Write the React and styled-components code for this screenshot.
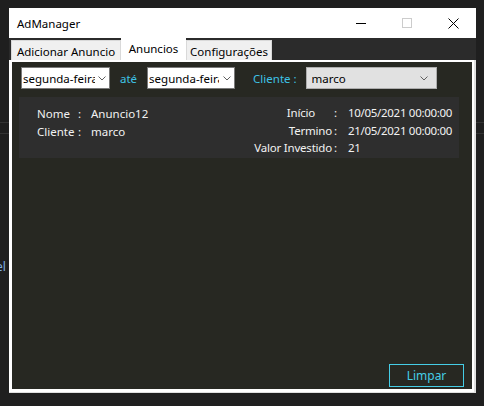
import React from 'react';
import styled, { createGlobalStyle } from 'styled-components';

const GlobalStyle = createGlobalStyle`
  html, body {
    margin: 0;
    padding: 0;
  }
  body {
    background: #1f1f1f;
    width: 484px;
    height: 406px;
    overflow: hidden;
    font-family: "Noto Sans", "Liberation Sans", sans-serif;
  }
`;

const Page = styled.div`
  position: relative;
  width: 484px;
  height: 406px;
  overflow: hidden;
`;

const BackLine = styled.div`
  position: absolute;
  left: 0;
  right: 0;
  height: 1px;
  background: #343434;
`;

const BackText = styled.span`
  position: absolute;
  left: -4px;
  top: 258px;
  font-size: 12px;
  color: #7fb0e0;
`;

const Window = styled.div`
  position: relative;
  margin: 8px 0 0 9px;
  width: 467px;
  height: 385px;
  display: flex;
  flex-direction: column;
  background: #2b2b2b;
`;

const TitleBar = styled.div`
  height: 30px;
  background: #fff;
  display: flex;
  align-items: center;
  padding-left: 8px;
`;

const Title = styled.span`
  flex: 1;
  font-size: 11.5px;
  color: #000;
`;

const CaptionButton = styled.div`
  width: 46px;
  height: 30px;
  display: flex;
  align-items: center;
  justify-content: center;
`;

const TabStrip = styled.div`
  height: 22px;
  display: flex;
  align-items: flex-end;
  padding-left: 2px;
`;

const Tab = styled.div`
  box-sizing: border-box;
  width: ${p => p.w}px;
  height: ${p => (p.active ? 22 : 20)}px;
  background: ${p => (p.active ? '#fff' : '#f0f0f0')};
  border: 1px solid ${p => (p.active ? '#fff' : '#d9d9d9')};
  border-bottom: none;
  font-size: 11.5px;
  color: #000;
  display: flex;
  align-items: ${p => (p.active ? 'flex-start' : 'center')};
  padding-top: ${p => (p.active ? 2 : 1)}px;
  justify-content: center;
`;

const TabPage = styled.div`
  flex: 1;
  display: flex;
  border-right: 2px solid #e0e0e0;
  border-bottom: 1px solid #e0e0e0;
`;

const Frame = styled.div`
  flex: 1;
  display: flex;
  flex-direction: column;
  background: #272822;
  border: 2px solid #fff;
  border-left-width: 3px;
  border-bottom-width: 3px;
`;

const FilterRow = styled.div`
  display: flex;
  align-items: center;
  margin-top: 5px;
  padding-left: 9px;
  height: 22px;
`;

const Select = styled.div`
  box-sizing: border-box;
  width: ${p => p.w}px;
  height: 22px;
  background: ${p => (p.flat ? '#e1e1e1' : '#fff')};
  border: 1px solid ${p => (p.flat ? '#adadad' : '#7a7a7a')};
  display: flex;
  align-items: center;
  padding-left: ${p => (p.flat ? 5 : 1)}px;
  font-size: 11.5px;
  color: #000;
`;

const SelectText = styled.span`
  width: ${p => p.w}px;
  overflow: hidden;
  white-space: nowrap;
`;

const Chevron = styled.svg`
  margin-left: auto;
  margin-right: ${p => p.mr}px;
`;

const Label = styled.span`
  font-size: 11.5px;
  color: #3ec3e6;
  margin: 0 ${p => p.mr}px 0 ${p => p.ml}px;
`;

const Card = styled.div`
  box-sizing: border-box;
  margin: 8px 0 0 7px;
  width: 440px;
  height: 61px;
  background: #2e2e2e;
  display: flex;
  padding: 8px 0 0 18px;
  font-size: 11.5px;
  color: #f2f2f2;
  line-height: 18px;
`;

const LeftInfo = styled.div`
  width: 216px;
  display: grid;
  grid-template-columns: 41px 13px auto;
  align-content: start;
`;

const RightInfo = styled.div`
  display: grid;
  grid-template-columns: 79px 16px auto;
  align-content: start;
  margin-top: -1px;
  line-height: 17.5px;
`;

const Key = styled.span`
  text-align: ${p => (p.right ? 'right' : 'left')};
  padding-right: ${p => p.pr || 0}px;
  padding-left: ${p => p.pl || 0}px;
  letter-spacing: ${p => (p.right ? '-0.2px' : 'normal')};
  white-space: nowrap;
`;

const Value = styled.span`
  white-space: nowrap;
  letter-spacing: ${p => (p.tight ? '-0.3px' : 'normal')};
`;

const ClearButton = styled.button`
  box-sizing: border-box;
  margin: auto 8px 2px 0;
  align-self: flex-end;
  width: 75px;
  height: 23px;
  background: transparent;
  border: 1px solid #45cde6;
  color: #45cde6;
  font-family: inherit;
  font-size: 12px;
  padding: 0;
`;

const Arrow = ({ mr }) => (
  <Chevron mr={mr} width="8" height="5" viewBox="0 0 8 5">
    <polyline points="0.5,0.5 4,4 7.5,0.5" fill="none" stroke="#606060" strokeWidth="1" />
  </Chevron>
);

export default function App() {
  return (
    <Page>
      <GlobalStyle />
      <BackLine style={{ top: 122 }} />
      <BackLine style={{ top: 133 }} />
      <BackText>el</BackText>
      <Window>
        <TitleBar>
          <Title>AdManager</Title>
          <CaptionButton>
            <svg width="10" height="10" viewBox="0 0 10 10">
              <line x1="0" y1="5.5" x2="10" y2="5.5" stroke="#000" strokeWidth="1" />
            </svg>
          </CaptionButton>
          <CaptionButton>
            <svg width="10" height="10" viewBox="0 0 10 10">
              <rect x="0.5" y="0.5" width="9" height="9" fill="none" stroke="#cccccc" strokeWidth="1" />
            </svg>
          </CaptionButton>
          <CaptionButton>
            <svg width="11" height="11" viewBox="0 0 11 11">
              <line x1="0.5" y1="0.5" x2="10.5" y2="10.5" stroke="#000" strokeWidth="1" />
              <line x1="10.5" y1="0.5" x2="0.5" y2="10.5" stroke="#000" strokeWidth="1" />
            </svg>
          </CaptionButton>
        </TitleBar>
        <TabStrip>
          <Tab w={110}>Adicionar Anuncio</Tab>
          <Tab w={65} active>Anuncios</Tab>
          <Tab w={86}>Configurações</Tab>
        </TabStrip>
        <TabPage>
          <Frame>
            <FilterRow>
              <Select w={89}>
                <SelectText w={72}>segunda-feira</SelectText>
                <Arrow mr={3} />
              </Select>
              <Label ml={10} mr={10}>até</Label>
              <Select w={88}>
                <SelectText w={70}>segunda-feira</SelectText>
                <Arrow mr={3} />
              </Select>
              <Label ml={18} mr={9}>Cliente :</Label>
              <Select w={131} flat>
                <SelectText w={80}>marco</SelectText>
                <Arrow mr={8} />
              </Select>
            </FilterRow>
            <Card>
              <LeftInfo>
                <Key>Nome</Key>
                <Key>:</Key>
                <Value>Anuncio12</Value>
                <Key>Cliente</Key>
                <Key>:</Key>
                <Value>marco</Value>
              </LeftInfo>
              <RightInfo>
                <Key right pr={17}>Início</Key>
                <Key pl={2}>:</Key>
                <Value tight>10/05/2021 00:00:00</Value>
                <Key right>Termino</Key>
                <Key pl={2}>:</Key>
                <Value tight>21/05/2021 00:00:00</Value>
                <Key right>Valor Investido</Key>
                <Key pl={2}>:</Key>
                <Value tight>21</Value>
              </RightInfo>
            </Card>
            <ClearButton>Limpar</ClearButton>
          </Frame>
        </TabPage>
      </Window>
    </Page>
  );
}
